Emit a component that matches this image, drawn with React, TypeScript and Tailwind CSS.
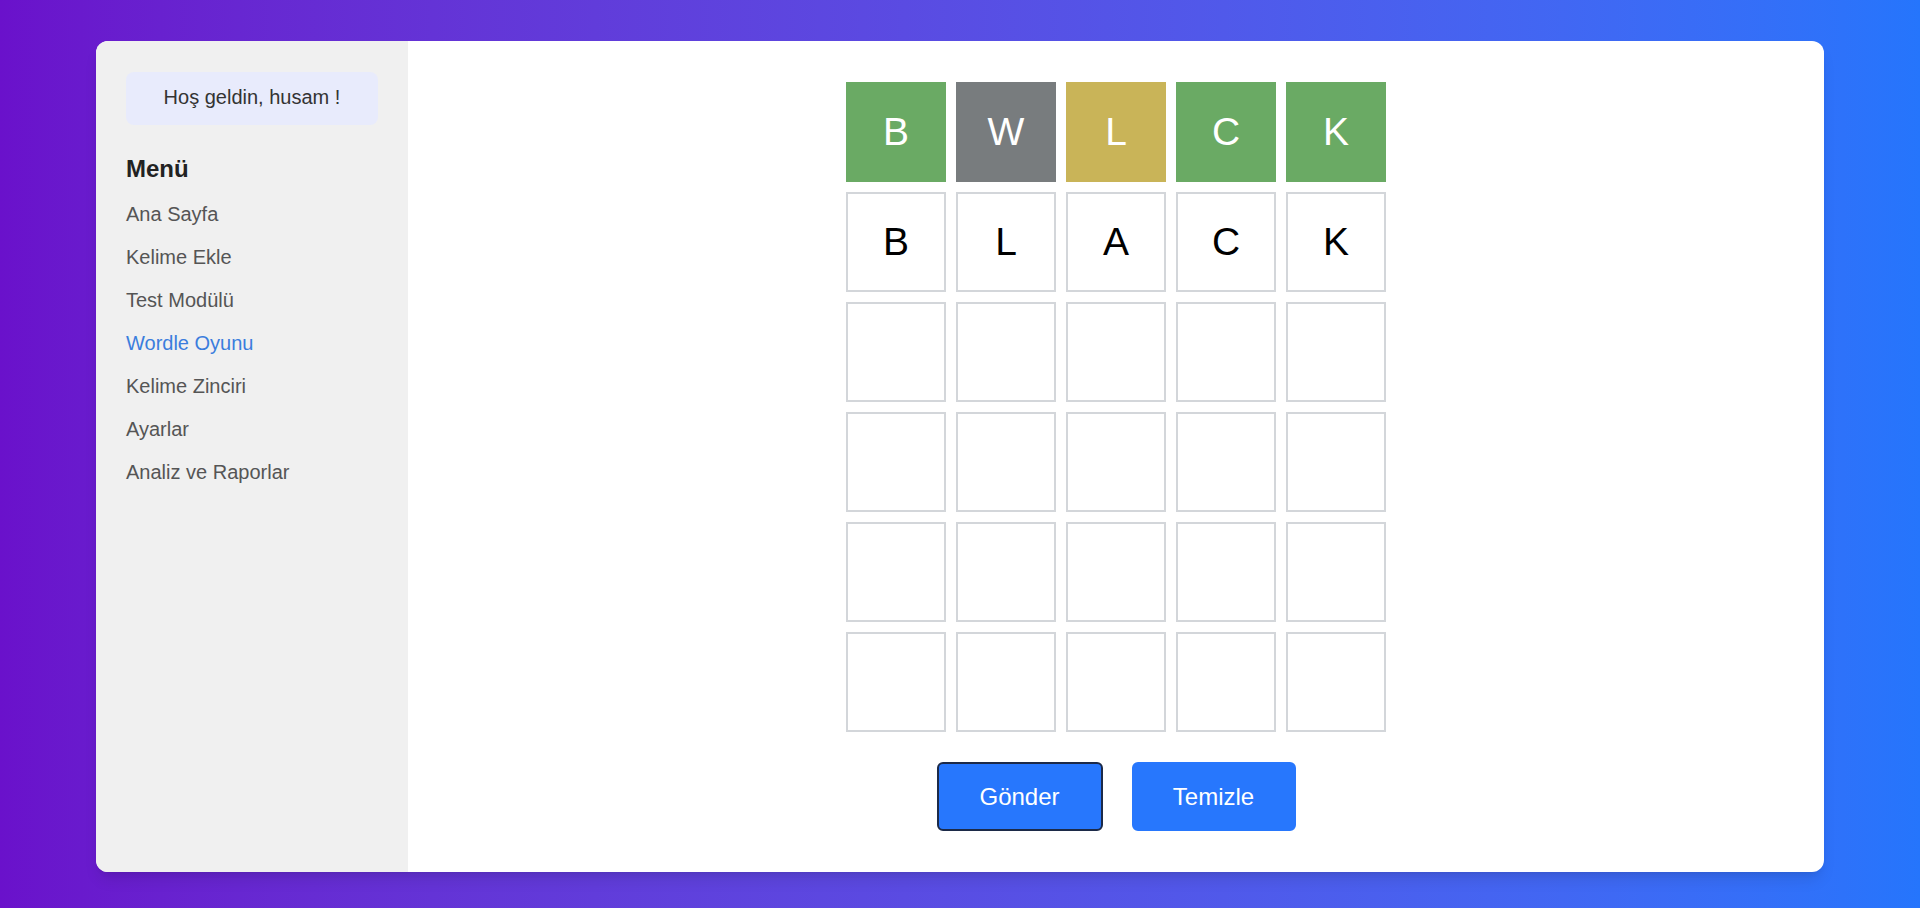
import React from 'react';

const menuItems = ['Ana Sayfa', 'Kelime Ekle', 'Test Modülü', 'Wordle Oyunu', 'Kelime Zinciri', 'Ayarlar', 'Analiz ve Raporlar'];

type Tile = { letter: string; state: 'correct' | 'absent' | 'present' | 'typed' | 'empty' };

const guessRow: Tile[] = [
  { letter: 'B', state: 'correct' },
  { letter: 'W', state: 'absent' },
  { letter: 'L', state: 'present' },
  { letter: 'C', state: 'correct' },
  { letter: 'K', state: 'correct' },
];

const typedRow: Tile[] = ['B', 'L', 'A', 'C', 'K'].map((l) => ({ letter: l, state: 'typed' as const }));
const emptyRow: Tile[] = Array.from({ length: 5 }, () => ({ letter: '', state: 'empty' as const }));

const rows: Tile[][] = [guessRow, typedRow, emptyRow, emptyRow, emptyRow, emptyRow];

function tileClass(state: Tile['state']) {
  switch (state) {
    case 'correct':
      return 'bg-[#6aaa64] border-[#6aaa64] text-white';
    case 'absent':
      return 'bg-[#787c7e] border-[#787c7e] text-white';
    case 'present':
      return 'bg-[#c9b458] border-[#c9b458] text-white';
    default:
      return 'bg-white border-[#d3d6da] text-black';
  }
}

export default function App() {
  return (
    <div
      className="w-full h-[908px] bg-gradient-to-r from-[#6a11cb] to-[#2575fc] pt-[41px] px-[96px] overflow-hidden"
      style={{ fontFamily: '"Liberation Sans", Arial, sans-serif' }}
    >
      <div className="h-[831px] bg-white rounded-[12px] shadow-lg flex overflow-hidden">
        {/* Sidebar */}
        <aside className="w-[312px] shrink-0 bg-[#f0f0f0] px-[30px] pt-[31px]">
          <div className="h-[53px] pb-[3px] rounded-lg bg-[#e8ebfc] flex items-center justify-center text-[20px] text-[#333]">
            Hoş geldin, husam !
          </div>
          <h3 className="mt-[30px] text-[24px] leading-[28px] font-bold text-[#222]">Menü</h3>
          <ul className="mt-[9px]">
            {menuItems.map((item) => (
              <li
                key={item}
                className={`h-[43px] flex items-center text-[20px] ${
                  item === 'Wordle Oyunu' ? 'text-[#3b7ddd]' : 'text-[#555]'
                }`}
              >
                {item}
              </li>
            ))}
          </ul>
        </aside>

        {/* Main */}
        <main className="flex-1 flex flex-col items-center pt-[41px]">
          <div className="grid grid-cols-5 gap-[10px]">
            {rows.map((row, r) =>
              row.map((tile, c) => (
                <div
                  key={`${r}-${c}`}
                  className={`w-[100px] h-[100px] border-2 flex items-center justify-center text-[39px] ${tileClass(tile.state)}`}
                >
                  {tile.letter}
                </div>
              ))
            )}
          </div>

          <div className="flex gap-[29px] mt-[30px]">
            <button className="h-[69px] w-[166px] rounded-[6px] bg-[#2777fd] border-2 border-[#1c2a48] text-white text-[24px]">
              Gönder
            </button>
            <button className="h-[69px] w-[164px] rounded-[6px] bg-[#2777fd] border-2 border-[#2777fd] text-white text-[24px]">
              Temizle
            </button>
          </div>
        </main>
      </div>
    </div>
  );
}
